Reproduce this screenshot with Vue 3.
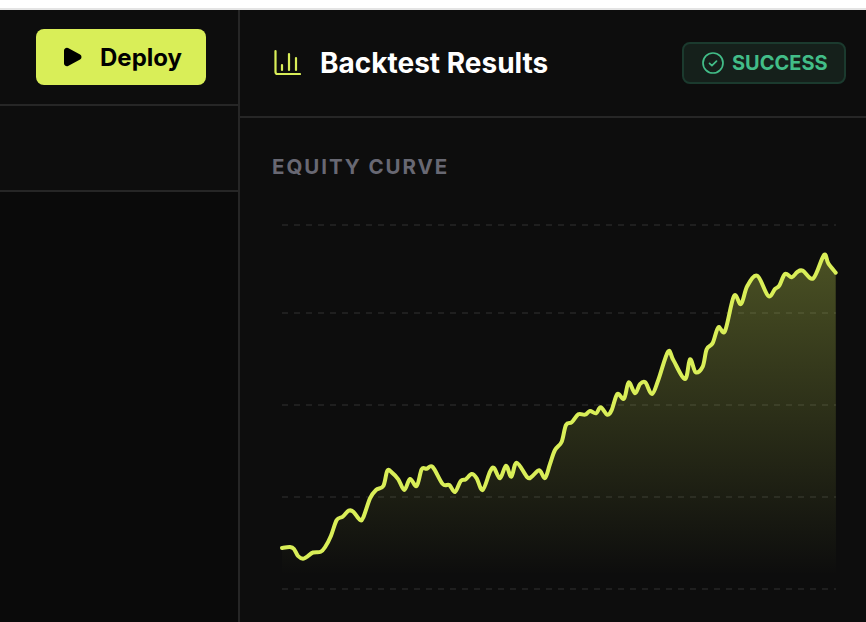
<script setup>
const pts = [[282,548],[290,547],[294,549],[298,556],[303,558.7],[307,556.7],[313,552.5],[320.7,551.7],[325,547.3],[331,535.7],[336.7,520],[342.7,516.7],[348.7,510.7],[353.3,511.7],[360,520],[363.3,517.3],[370,498.3],[376,490],[383.3,486],[387.3,470.7],[391.7,472.3],[398.3,479.3],[404.3,490],[410,479],[416.7,486],[421.7,469.3],[426.7,468.7],[432.7,467],[442.7,484],[449.3,485],[455,492],[460.7,481],[465.7,479.3],[471.7,474],[476.7,478.3],[482.7,490],[490,471.7],[494,468],[500,478.3],[506,465.7],[511.3,476.7],[516.7,462.7],[527.3,477.3],[531.7,476.7],[539.3,470.3],[545,478],[550,464],[555,450],[561.7,441.7],[566,425],[571.7,422.3],[578.3,414.3],[585,414.7],[590,411],[596,413.3],[600.7,407.3],[607.3,414.7],[611.7,410],[617.3,394],[624,398.7],[628.7,382.3],[635,393.3],[640,384],[645.3,382.3],[652,394],[658.3,380],[668,351.7],[673.3,360],[685,379],[690,359.3],[695.7,372.3],[702.7,366.7],[706.7,349.3],[712.7,343],[718.3,327.3],[725,331],[734,296],[741,304],[747.3,286],[757.3,275.7],[768.3,296],[775,289],[779.3,285.7],[785,274],[791.7,277.3],[797.3,272],[802.7,270.7],[813.3,278.3],[824,255],[828.3,263.3],[835.7,272.7]]

function smooth(p) {
  let d = `M${p[0][0]},${p[0][1]}`
  for (let i = 0; i < p.length - 1; i++) {
    const a = p[Math.max(i - 1, 0)], b = p[i], c = p[i + 1], e = p[Math.min(i + 2, p.length - 1)]
    const c1x = b[0] + (c[0] - a[0]) / 6, c1y = b[1] + (c[1] - a[1]) / 6
    const c2x = c[0] - (e[0] - b[0]) / 6, c2y = c[1] - (e[1] - b[1]) / 6
    d += `C${c1x.toFixed(1)},${c1y.toFixed(1)} ${c2x.toFixed(1)},${c2y.toFixed(1)} ${c[0]},${c[1]}`
  }
  return d
}
const line = smooth(pts)
const area = `${line}L836,589L282,589Z`
const grid = [225, 313, 405, 497, 589]
</script>

<template>
  <div class="page">
    <div class="top"></div>
    <div class="body">
      <aside class="side">
        <div class="side-head">
          <button class="deploy">
            <svg class="play" viewBox="0 0 18 20" width="18" height="20"><path d="M3.6 2 15.6 8.5a1.7 1.7 0 0 1 0 3L3.6 18A1.8 1.8 0 0 1 1 16.4V3.6A1.8 1.8 0 0 1 3.6 2Z" fill="#000" stroke="#000" stroke-width="2" stroke-linejoin="round"/></svg>
            <span>Deploy</span>
          </button>
        </div>
        <div class="side-row"></div>
        <div class="side-rest"></div>
      </aside>
      <main class="main">
        <header class="head">
          <div class="title">
            <svg class="chart-icon" viewBox="0 0 28 28" width="28" height="28" fill="none" stroke="#d9ee58" stroke-width="2.2" stroke-linecap="round"><path d="M2.5 2v21a2 2 0 0 0 2 2H27"/><path d="M9 21v-5"/><path d="M16 21V5"/><path d="M23 21V9"/></svg>
            <h1>Backtest Results</h1>
          </div>
          <div class="badge">
            <svg viewBox="0 0 24 24" width="24" height="24" fill="none" stroke="#42bd88" stroke-width="1.7" stroke-linecap="round" stroke-linejoin="round"><circle cx="12" cy="12" r="10"/><path d="m8.5 12.3 2.4 2.4 4.6-4.6"/></svg>
            <span>SUCCESS</span>
          </div>
        </header>
        <section class="content">
          <h2>EQUITY CURVE</h2>
          <svg class="chart" viewBox="272 215 574 385" width="574" height="385">
            <defs>
              <linearGradient id="fade" gradientUnits="userSpaceOnUse" x1="0" y1="255" x2="0" y2="575">
                <stop offset="0" stop-color="#d9ee58" stop-opacity="0.3"/>
                <stop offset="1" stop-color="#d9ee58" stop-opacity="0"/>
              </linearGradient>
            </defs>
            <line v-for="y in grid" :key="y" x1="282" x2="836" :y1="y" :y2="y" stroke="#1f1f1f" stroke-width="2" stroke-dasharray="6 6"/>
            <path :d="area" fill="url(#fade)"/>
            <path :d="line" fill="none" stroke="#d9ee58" stroke-width="4" stroke-linejoin="round" stroke-linecap="round"/>
          </svg>
        </section>
      </main>
    </div>
  </div>
</template>

<style>
html, body { margin: 0; background: #fff; overflow: hidden; }
</style>

<style scoped>
.page {
  width: 866px;
  height: 622px;
  display: flex;
  flex-direction: column;
  overflow: hidden;
  font-family: Inter, "Liberation Sans", sans-serif;
}
.top {
  height: 8px;
  flex: none;
  background: #fff;
  border-bottom: 2px solid #e4e4e4;
}
.body {
  flex: 1;
  display: flex;
  min-height: 0;
  background: #0d0d0d;
}
.side {
  width: 238px;
  flex: none;
  display: flex;
  flex-direction: column;
  border-right: 2px solid #262626;
}
.side-head {
  height: 96px;
  box-sizing: border-box;
  padding: 19px 32px 0 36px;
  border-bottom: 2px solid #262626;
}
.deploy {
  width: 170px;
  height: 56px;
  display: flex;
  align-items: center;
  gap: 18px;
  padding: 0 0 0 28px;
  box-sizing: border-box;
  border: 0;
  border-radius: 8px;
  background: #d9ee58;
  color: #000;
  font: 700 24px Inter, sans-serif;
}
.side-row {
  height: 86px;
  box-sizing: border-box;
  border-bottom: 2px solid #262626;
}
.side-rest {
  flex: 1;
  background: #0a0a0a;
}
.main {
  flex: 1;
  min-width: 0;
}
.head {
  height: 108px;
  box-sizing: border-box;
  border-bottom: 2px solid #262626;
  display: flex;
  align-items: center;
  justify-content: space-between;
  padding: 0 20px 0 33px;
}
.title {
  display: flex;
  align-items: center;
  gap: 19px;
}
.title h1 {
  margin: 0;
  font-size: 28px;
  font-weight: 700;
  color: #fff;
}
.badge {
  width: 164px;
  height: 42px;
  box-sizing: border-box;
  display: flex;
  align-items: center;
  gap: 7px;
  padding-left: 17px;
  background: #15201b;
  border: 2px solid #1b3a2e;
  border-radius: 8px;
  color: #42bd88;
  font-size: 20px;
  font-weight: 700;
}
.content {
  padding: 36px 0 0 32px;
}
.content h2 {
  margin: 0;
  height: 26px;
  line-height: 26px;
  font-size: 20.5px;
  font-weight: 700;
  letter-spacing: 1.95px;
  color: #686873;
}
.chart {
  display: block;
  margin-top: 35px;
}
</style>
